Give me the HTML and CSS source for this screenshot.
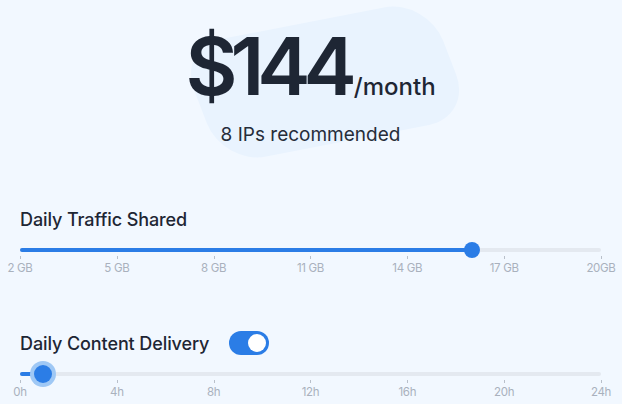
FILE: index.html
```html
<!DOCTYPE html>
<html>
<head>
  <title>Pricing</title>
<link rel="stylesheet" href="styles.css">
</head>
<body>
  <div class="main">
    <div class="price_box">
      <div class="blob"></div>
      <div class="price">
        <span class="amount">$144</span><span class="per">/month</span>
      </div>
      <div class="ips">8 IPs recommended</div>
    </div>

    <div class="slider_block traffic">
      <div class="label_row">
        <span class="label">Daily Traffic Shared</span>
      </div>
      <div class="track">
        <div class="fill" style="width: 77.8%"></div>
        <div class="thumb" style="left: 77.8%"></div>
      </div>
      <div class="ticks">
        <span>2 GB</span>
        <span>5 GB</span>
        <span>8 GB</span>
        <span>11 GB</span>
        <span>14 GB</span>
        <span>17 GB</span>
        <span>20GB</span>
      </div>
    </div>

    <div class="slider_block delivery">
      <div class="label_row">
        <span class="label">Daily Content Delivery</span>
        <span class="toggle"><span class="knob"></span></span>
      </div>
      <div class="track">
        <div class="fill" style="width: 4%"></div>
        <div class="thumb halo" style="left: 4%"></div>
      </div>
      <div class="ticks">
        <span>0h</span>
        <span>4h</span>
        <span>8h</span>
        <span>12h</span>
        <span>16h</span>
        <span>20h</span>
        <span>24h</span>
      </div>
    </div>
  </div>
</body>
</html>
```

FILE: styles.css
```css
body {
  margin: 0;
  font-family: Inter, "Noto Sans", sans-serif;
  background-color: #f2f8ff;
  color: #1e2634;
  overflow: hidden;
}
.main {
  padding: 0 21px 0 20px;
}
.price_box {
  position: relative;
  height: 206px;
  display: flex;
  flex-direction: column;
  align-items: center;
}
.blob {
  position: absolute;
  left: 178px;
  top: 20px;
  width: 254px;
  height: 124px;
  background-color: #e9f3fe;
  border-radius: 44px;
  transform: rotate(-11deg) skewX(10deg);
}
.price {
  position: relative;
  display: flex;
  align-items: baseline;
  margin-top: 18px;
  margin-left: 0;
}
.amount {
  font-size: 80px;
  font-weight: 600;
  letter-spacing: -7px;
  line-height: 96px;
}
.per {
  font-size: 24px;
  font-weight: 500;
  margin-left: 4px;
}
.ips {
  position: relative;
  font-size: 19px;
  margin-top: 9px;
  color: #262d3a;
}
.slider_block {
  position: relative;
}
.delivery {
  margin-top: 55px;
}
.label_row {
  display: flex;
  align-items: center;
  gap: 20px;
  height: 26px;
}
.label {
  font-size: 18px;
  font-weight: 500;
  letter-spacing: -0.1px;
}
.toggle {
  display: flex;
  align-items: center;
  justify-content: flex-end;
  width: 40px;
  height: 24px;
  box-sizing: border-box;
  padding: 0 3px;
  border-radius: 12px;
  background-color: #2b7de6;
}
.knob {
  width: 18px;
  height: 18px;
  border-radius: 50%;
  background-color: #fff;
}
.track {
  position: relative;
  height: 4px;
  border-radius: 2px;
  background-color: #e4e9f0;
  margin-top: 16px;
}
.delivery .track {
  margin-top: 16px;
}
.fill {
  height: 4px;
  border-radius: 2px;
  background-color: #2b7de6;
}
.thumb {
  position: absolute;
  top: 50%;
  width: 16px;
  height: 16px;
  margin-left: -8px;
  margin-top: -8px;
  border-radius: 50%;
  background-color: #2b7de6;
}
.thumb.halo {
  width: 18px;
  height: 18px;
  margin-left: -9px;
  margin-top: -9px;
  box-shadow: 0 0 0 4px #9fc8f5;
}
.ticks {
  display: flex;
  justify-content: space-between;
  margin: 0 -20px;
  padding-top: 4px;
}
.ticks span {
  position: relative;
  width: 40px;
  text-align: center;
  font-size: 11.5px;
  color: #a9b1bd;
  padding-top: 5px;
  letter-spacing: -0.3px;
}
.ticks span::before {
  content: "";
  position: absolute;
  top: 0;
  left: 20px;
  width: 1px;
  height: 3px;
  background-color: #b9c0ca;
}
```
